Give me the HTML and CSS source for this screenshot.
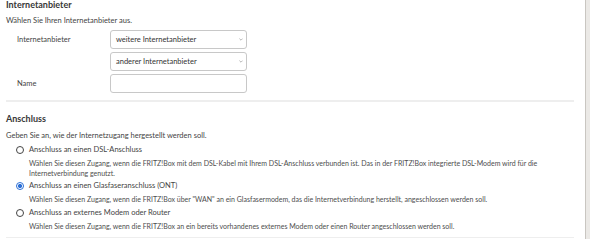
FILE: index.html
```html
<!DOCTYPE html>
<html lang="de">
<head>
<meta charset="utf-8">
<title>Internetanbieter</title>
<link rel="stylesheet" href="styles.css">
</head>
<body>
<div class="page">
  <main class="content">
    <section class="block">
      <h2 class="heading">Internetanbieter</h2>
      <p class="intro">Wählen Sie Ihren Internetanbieter aus.</p>
      <div class="form">
        <span class="label">Internetanbieter</span>
        <div class="field select">weitere Internetanbieter<svg class="chev" viewBox="0 0 4 3" width="4" height="3"><path d="M0.4 0.6 L2 2.2 L3.6 0.6" fill="none" stroke="#999" stroke-width="0.7"/></svg></div>
        <span class="label"></span>
        <div class="field select">anderer Internetanbieter<svg class="chev" viewBox="0 0 4 3" width="4" height="3"><path d="M0.4 0.6 L2 2.2 L3.6 0.6" fill="none" stroke="#999" stroke-width="0.7"/></svg></div>
        <span class="label">Name</span>
        <div class="field input"></div>
      </div>
    </section>
    <div class="divider"></div>
    <section class="block block-second">
      <h2 class="heading">Anschluss</h2>
      <p class="intro intro-second">Geben Sie an, wie der Internetzugang hergestellt werden soll.</p>
      <div class="options">
        <div class="option">
          <div class="option-row"><span class="radio"></span><span class="option-label">Anschluss an einen DSL-Anschluss</span></div>
          <p class="desc">Wählen Sie diesen Zugang, wenn die FRITZ!Box mit dem DSL-Kabel mit Ihrem DSL-Anschluss verbunden ist. Das in der FRITZ!Box integrierte DSL-Modem wird für die Internetverbindung genutzt.</p>
        </div>
        <div class="option">
          <div class="option-row"><span class="radio checked"></span><span class="option-label">Anschluss an einen Glasfaseranschluss (ONT)</span></div>
          <p class="desc">Wählen Sie diesen Zugang, wenn die FRITZ!Box über "WAN" an ein Glasfasermodem, das die Internetverbindung herstellt, angeschlossen werden soll.</p>
        </div>
        <div class="option">
          <div class="option-row"><span class="radio"></span><span class="option-label">Anschluss an externes Modem oder Router</span></div>
          <p class="desc">Wählen Sie diesen Zugang, wenn die FRITZ!Box an ein bereits vorhandenes externes Modem oder einen Router angeschlossen werden soll.</p>
        </div>
      </div>
    </section>
    <div class="divider divider-bottom"></div>
  </main>
  <div class="scrollbar"></div>
</div>
</body>
</html>
```
FILE: styles.css
```css
html, body {
  margin: 0;
  padding: 0;
  background: #fff;
  overflow: hidden;
}
body {
  font-family: "Lato", "Open Sans", sans-serif;
  color: #444;
  font-size: 7.5px;
}
.page {
  display: flex;
  width: 590px;
  height: 239px;
}
.content {
  flex: 1;
  padding: 0 11px 0 6px;
}
.scrollbar {
  width: 4px;
  border-left: 1px solid #c9c6c1;
  background: #ebe9e6;
}
.heading {
  margin: 0;
  font-size: 9px;
  line-height: 10px;
  font-weight: 700;
  color: #383838;
}
.intro {
  margin: 6px 0 0;
  line-height: 10px;
}
.form {
  margin-top: 4px;
  display: grid;
  grid-template-columns: 93px 137px;
  grid-auto-rows: 19px;
  row-gap: 3px;
  padding-left: 11px;
  align-items: center;
}
.label {
  line-height: 10px;
}
.field {
  box-sizing: border-box;
  height: 19px;
  border: 1px solid #c8c8c8;
  border-radius: 3px;
  background: #fff;
  display: flex;
  align-items: center;
  justify-content: space-between;
  padding: 0 3px 0 5px;
  color: #333;
}
.chev {
  display: block;
}
.divider {
  height: 2px;
  background: #eeeeee;
  margin-top: 7px;
}
.block-second {
  margin-top: 12px;
}
.intro-second {
  margin-top: 7px;
}
.options {
  margin-top: 3.5px;
  padding-left: 10px;
}
.option + .option {
  margin-top: 3.5px;
}
.option-row {
  display: flex;
  align-items: center;
  height: 10px;
  line-height: 10px;
}
.radio {
  box-sizing: border-box;
  width: 8px;
  height: 8px;
  border: 1px solid #444;
  border-radius: 50%;
  margin-right: 5px;
  flex: none;
}
.radio.checked {
  border-color: #2b6fd6;
  background: radial-gradient(circle, #2b6fd6 0 2px, #fff 2.2px);
}
.option-label {
  color: #444;
}
.desc {
  margin: 3px 0 0 13px;
  line-height: 10px;
  font-size: 7px;
  color: #4d4d4d;
}
.divider-bottom {
  margin-top: 6px;
  height: 1px;
}
```
